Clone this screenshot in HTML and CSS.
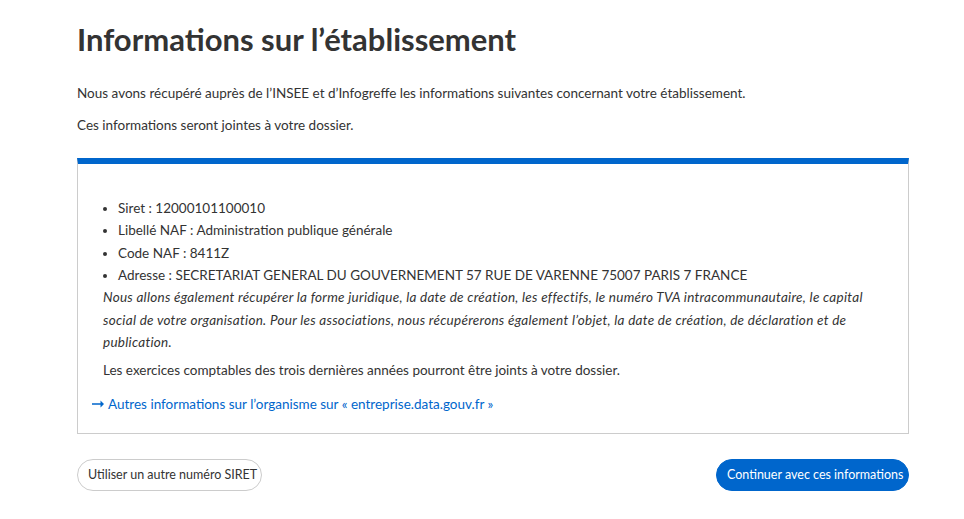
FILE: index.html
```html
<!DOCTYPE html>
<html lang="fr">
<head>
<meta charset="utf-8">
<title>Informations sur l'établissement</title>
<link rel="stylesheet" href="styles.css">
</head>
<body>
<main class="page">
  <h1 class="title">Informations sur l’établissement</h1>
  <p class="intro">Nous avons récupéré auprès de l’INSEE et d’Infogreffe les informations suivantes concernant votre établissement.</p>
  <p class="intro">Ces informations seront jointes à votre dossier.</p>
  <section class="card">
    <ul class="facts">
      <li>Siret : 12000101100010</li>
      <li>Libellé NAF : Administration publique générale</li>
      <li>Code NAF : 8411Z</li>
      <li>Adresse : SECRETARIAT GENERAL DU GOUVERNEMENT 57 RUE DE VARENNE 75007 PARIS 7 FRANCE</li>
    </ul>
    <p class="note">Nous allons également récupérer la forme juridique, la date de création, les effectifs, le numéro TVA intracommunautaire, le capital social de votre organisation. Pour les associations, nous récupérerons également l’objet, la date de création, de déclaration et de publication.</p>
    <p class="plain">Les exercices comptables des trois dernières années pourront être joints à votre dossier.</p>
    <a class="more" href="#"><svg class="arrow" width="12" height="8" viewBox="0 0 12 8" aria-hidden="true"><path d="M0 3.2h8.5V0.6L12 4 8.5 7.4V4.8H0z" fill="currentColor"/></svg> Autres informations sur l’organisme sur « entreprise.data.gouv.fr »</a>
  </section>
  <div class="actions">
    <button class="btn btn-secondary">Utiliser un autre numéro SIRET</button>
    <button class="btn btn-primary">Continuer avec ces informations</button>
  </div>
</main>
</body>
</html>
```
FILE: styles.css
```css
* { box-sizing: border-box; }
body {
  margin: 0;
  font-family: Lato, "Noto Sans", sans-serif;
  color: #333;
  background: #fff;
}
.page {
  width: 832px;
  margin: 0 0 0 77px;
  padding-top: 19px;
}
.title {
  font-size: 31px;
  font-weight: 700;
  margin: 0 0 25px;
  line-height: 40px;
  color: #333;
}
.intro {
  font-size: 13.5px;
  line-height: 18px;
  margin: 0 0 14px;
}
.card {
  margin-top: 24px;
  border: 1px solid #ccc;
  border-top: 6px solid #0066cc;
  padding: 33px 25px 18px 25px;
  font-size: 13.5px;
}
.facts {
  margin: 0;
  padding-left: 15px;
}
.facts li {
  line-height: 22.3px;
}
.note {
  font-style: italic;
  letter-spacing: 0.27px;
  line-height: 22.5px;
  margin: 0 0 5px;
}
.plain {
  line-height: 22px;
  margin: 0 0 12px;
}
.more {
  display: block;
  margin-left: -11px;
  color: #0066cc;
  text-decoration: none;
  line-height: 22px;
}
.arrow { vertical-align: 1px; margin-right: 1px; }
.actions {
  display: flex;
  justify-content: space-between;
  margin-top: 25px;
}
.btn {
  font-family: Lato, "Noto Sans", sans-serif;
  font-size: 12.5px;
  height: 32px;
  border-radius: 16px;
  padding: 0 10px;
  white-space: nowrap;
  cursor: pointer;
}
.btn-secondary {
  background: #fff;
  border: 1px solid #ccc;
  color: #333;
  width: 185px;
}
.btn-primary {
  background: #0066cc;
  border: 1px solid #0066cc;
  color: #fff;
  width: 193px;
}
```
